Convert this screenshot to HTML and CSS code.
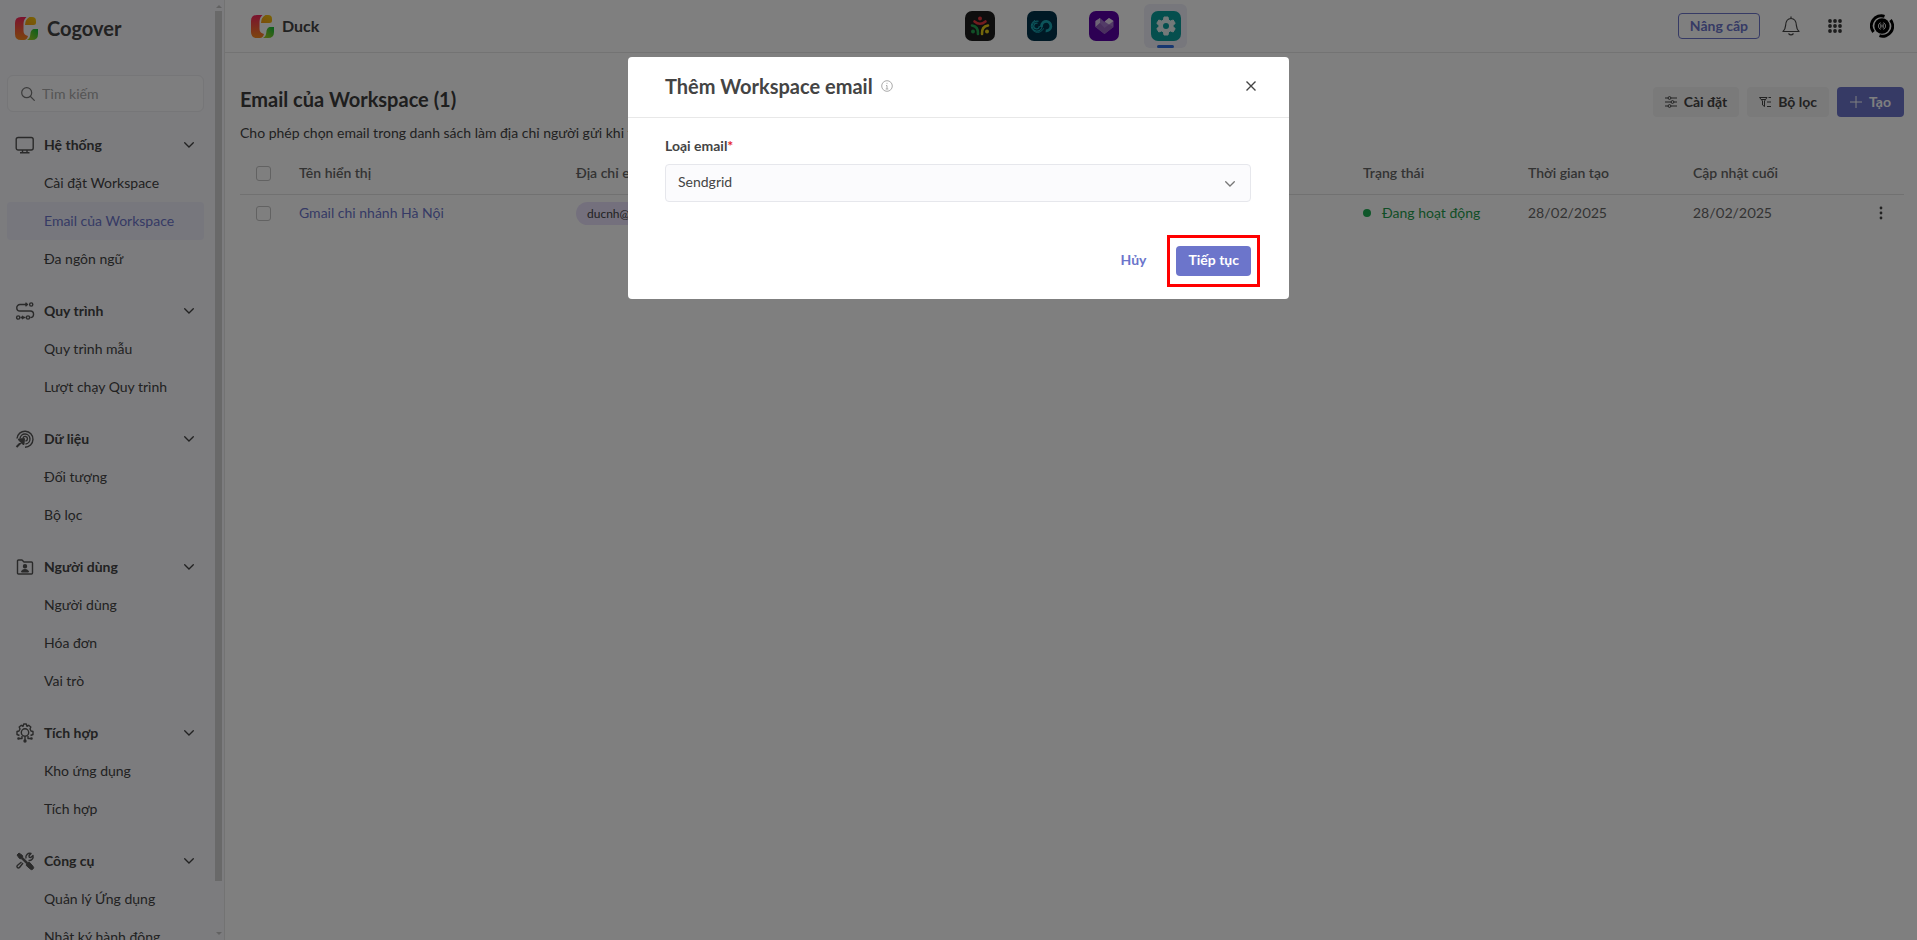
FILE: index.html
```html
<!DOCTYPE html>
<html lang="vi">
<head>
  <meta charset="UTF-8" />
  <meta name="viewport" content="width=device-width, initial-scale=1.0" />
  <title>Email của Workspace</title>
  <link rel="stylesheet" href="styles.css">
</head>
<body>
  <!-- shared icons -->
  <svg class="defs" width="0" height="0" aria-hidden="true">
    <defs>
      <linearGradient id="gRed" x1="0" y1="0" x2="0" y2="1">
        <stop offset="0" stop-color="#f5255e" />
        <stop offset="1" stop-color="#f98a1c" />
      </linearGradient>
      <linearGradient id="gYellow" x1="0" y1="1" x2="1" y2="0">
        <stop offset="0" stop-color="#f59a14" />
        <stop offset="1" stop-color="#f2c80c" />
      </linearGradient>
      <linearGradient id="gGreen" x1="0" y1="1" x2="1" y2="0">
        <stop offset="0" stop-color="#b5cf1f" />
        <stop offset="1" stop-color="#0fbf3c" />
      </linearGradient>
      <symbol id="logo" viewBox="0 0 23 23">
        <path d="M6 0h5.500Q8.500 2.500 8.500 7v7q0 4 4.500 5-1 4-4 4H6q-6 0-6-6V6q0-6 6-6z" fill="url(#gRed)" />
        <path d="M14.500 0H17q4 0 4 4v1.500Q21 8 18.500 8H10q0-5.500 4.500-8z" fill="url(#gYellow)" />
        <path d="M18.500 12H23v5q0 6-6 6h-5q3-1.500 3.300-5.500Q15.500 13 18.500 12z" fill="url(#gGreen)" />
      </symbol>
      <symbol id="chevron" viewBox="0 0 10 6">
        <path d="M.7.7 5 5 9.300.7" fill="none" stroke="currentColor" stroke-width="1.300" stroke-linecap="round" />
      </symbol>
    </defs>
  </svg>

  <div class="app">
    <aside class="sidebar">
      <div class="sidebar-content">
        <div class="brand">
          <svg class="logo"><use href="#logo" /></svg>
          <span>Cogover</span>
        </div>
        <label class="search">
          <svg width="14" height="14" viewBox="0 0 14 14" fill="none" stroke="#777" stroke-width="1.200" stroke-linecap="round"><circle cx="5.700" cy="5.700" r="5" /><path d="m9.500 9.500 3.800 3.800" /></svg>
          <input type="text" placeholder="Tìm kiếm" aria-label="Tìm kiếm">
        </label>
        <nav>
          <section class="group">
            <button class="group-title">
              <svg class="group-icon" viewBox="0 0 20 20"><rect x="1.200" y="2.500" width="17" height="12.500" rx="2" /><path d="M7.500 15v2.500M12 15v2.500M5 17.700h9.500" /></svg>
              <span>Hệ thống</span>
              <svg class="chevron"><use href="#chevron" /></svg>
            </button>
            <a href="#">Cài đặt Workspace</a>
            <a href="#" class="active">Email của Workspace</a>
            <a href="#">Đa ngôn ngữ</a>
          </section>
          <section class="group">
            <button class="group-title">
              <svg class="group-icon" viewBox="0 0 20 20"><path d="M12 3.500H5a3.200 3.200 0 0 0 0 6.500h10.300a3 3 0 0 1 0 6.500M10.500 1.800 12.500 3.500l-2 1.700M5.500 16.500h5M7 15l2 1.500L7 18" /><circle cx="16.200" cy="3.500" r="1.600" /><circle cx="3.200" cy="16.500" r="1.600" /><circle cx="13" cy="16.500" r="1.600" /></svg>
              <span>Quy trình</span>
              <svg class="chevron"><use href="#chevron" /></svg>
            </button>
            <a href="#">Quy trình mẫu</a>
            <a href="#">Lượt chạy Quy trình</a>
          </section>
          <section class="group">
            <button class="group-title">
              <svg class="group-icon" viewBox="0 0 20 20"><path d="M2 9.500a8 8 0 1 1 8 8.700M5 9.500A5 5 0 1 1 10.500 15M8 9a2.300 2.300 0 1 1 2.500 3" /><path d="m1.500 18 6-6M4 10.500l5-.5-.5 5z" class="solid" stroke-width="2" /></svg>
              <span>Dữ liệu</span>
              <svg class="chevron"><use href="#chevron" /></svg>
            </button>
            <a href="#">Đối tượng</a>
            <a href="#">Bộ lọc</a>
          </section>
          <section class="group">
            <button class="group-title">
              <svg class="group-icon" viewBox="0 0 20 20"><path d="M3.500 3H7l2 2h7.500q1 0 1 1v10q0 1-1 1h-13q-1 0-1-1V4q0-1 1-1z" /><circle cx="10" cy="9.300" r="1.500" class="solid" /><path d="M6.500 15q0-2.500 3.500-2.500t3.500 2.500z" class="solid" stroke-width="1" /></svg>
              <span>Người dùng</span>
              <svg class="chevron"><use href="#chevron" /></svg>
            </button>
            <a href="#">Người dùng</a>
            <a href="#">Hóa đơn</a>
            <a href="#">Vai trò</a>
          </section>
          <section class="group">
            <button class="group-title">
              <svg class="group-icon" viewBox="0 0 20 20"><circle cx="10" cy="9.500" r="3.700" /><path d="M4.500 12.500 2 11.500v-3l2-.5 1-2-.8-2L6.300 2.300l1.700 1L8.700 1h2.600l.7 2.300 1.700-1L15.800 4 15 6l1 2 2 .5v3l-2.500 1M10 13.500V18M7 13v2.500H3.500M13 13v2.500h3.500" /><circle cx="10" cy="18" r="1" class="solid" /><circle cx="3.500" cy="15.500" r=".6" class="solid" /><circle cx="16.500" cy="15.500" r=".6" class="solid" /></svg>
              <span>Tích hợp</span>
              <svg class="chevron"><use href="#chevron" /></svg>
            </button>
            <a href="#">Kho ứng dụng</a>
            <a href="#">Tích hợp</a>
          </section>
          <section class="group">
            <button class="group-title">
              <svg class="group-icon" viewBox="0 0 20 20"><path d="M2 4 4 2l3.500 2.500.3 2 5 5 1.700-.2 3.500 4a1.900 1.900 0 0 1-2.700 2.700l-4-3.500.2-1.700-5-5-2-.3z" class="solid" stroke-width="1" /><path d="m8 12-3.700 4.700a1.500 1.500 0 0 1-2-2.200L6.500 11M11 7.500a4 4 0 0 1 5-5l-2 2.300.3 1.500 1.500.3L18 4.500a4 4 0 0 1-4.500 5" /></svg>
              <span>Công cụ</span>
              <svg class="chevron"><use href="#chevron" /></svg>
            </button>
            <a href="#">Quản lý Ứng dụng</a>
            <a href="#">Nhật ký hành động</a>
          </section>
        </nav>
      </div>
      <div class="scrollbar">
        <span class="arrow-up"></span>
        <span class="thumb"></span>
        <span class="arrow-down"></span>
      </div>
    </aside>

    <div class="page">
      <header class="topbar">
        <div class="workspace">
          <svg class="logo"><use href="#logo" /></svg>
          <span>Duck</span>
        </div>
        <div class="apps">
          <button class="app-tile" aria-label="Nhân sự">
            <svg viewBox="0 0 30 30"><rect width="30" height="30" rx="7" fill="#1d1d1d" /><g fill="none" stroke-width="2.600" stroke-linecap="round"><path d="M9.500 10.500q5.500 4.500 11 0" stroke="#e8383d" /><path d="M7 14.500q6.500 1 6 8.500" stroke="#22a14f" /><path d="M23 14.500q-6.500 1-6 8.500" stroke="#e9cf17" /></g><circle cx="15" cy="7.500" r="2" fill="#e8383d" /><circle cx="8" cy="20.500" r="2" fill="#22a14f" /><circle cx="22" cy="20.500" r="2" fill="#e9cf17" /></svg>
          </button>
          <button class="app-tile" aria-label="Kết nối">
            <svg viewBox="0 0 30 30"><rect width="30" height="30" rx="7" fill="#01334b" /><g fill="none" stroke="#18a9b5"><path d="M11.500 10.300a5 5 0 1 0 3.500 5.700" stroke-width="1.200" /><path d="M10.500 8.300a7 7 0 1 0 6.500 9" stroke-width="1" opacity="0" /><path d="M10.500 12.400a2.800 2.800 0 1 0 1.700 3.600V15" stroke-width="1.200" /><path d="M8 9.300a6.300 6.300 0 1 0 8.500 8" stroke-width="1" /><path d="M14.500 16v-1.200a4.700 4.700 0 1 1 4.200 5" stroke-width="2.800" /></g></svg>
          </button>
          <button class="app-tile" aria-label="Khách hàng">
            <svg viewBox="0 0 30 30"><rect width="30" height="30" rx="7" fill="#5b00a6" /><path d="m6.500 10 4.500-3 4.500 4L20 7l4.500 3v6l-9 7-9-7z" fill="#a678cf" /><path d="m6.500 10 4.500-3v5l-4.500 4z" fill="#dcc8ec" /><path d="m15.500 10.500 4.500-3.500 4.500 3-4.500 3.500z" fill="#ecdff5" /><path d="m6.500 16 4.500-4 4.500 5 4.500-3.500 4.500 2.500-9 7z" fill="#9560bd" /></svg>
          </button>
          <button class="app-tile current" aria-label="Thiết lập">
            <svg viewBox="0 0 30 30"><rect width="30" height="30" rx="7" fill="#0a9f9c" /><path d="M13 6h4l.6 3 1.800 1 2.800-1 2 3.400-2.200 2v1.200l2.200 2-2 3.400-2.800-1-1.800 1-.6 3h-4l-.6-3-1.800-1-2.800 1-2-3.400 2.200-2v-1.200l-2.200-2 2-3.400 2.800 1 1.800-1z" fill="#e6f3f3" stroke="#e6f3f3" stroke-linejoin="round" /><circle cx="15" cy="15" r="3" fill="#0a9f9c" /></svg>
          </button>
        </div>
        <div class="tools">
          <button class="upgrade">Nâng cấp</button>
          <button class="icon-button" aria-label="Thông báo">
            <svg width="18" height="20" viewBox="0 0 18 20" fill="none" stroke="#444" stroke-width="1.200" stroke-linejoin="round"><path d="M9 .500v2M1 15.500h16q-2.300-2-2.600-6Q14 2.500 9 2.500T3.600 9.500q-.3 4-2.600 6zM6.500 17.500q2.500 2.800 5 0" /></svg>
          </button>
          <button class="icon-button" aria-label="Ứng dụng">
            <svg width="14" height="14" viewBox="0 0 14 14" fill="#3a3a3a"><circle cx="2" cy="2" r="1.900" /><circle cx="7" cy="2" r="1.900" /><circle cx="12" cy="2" r="1.900" /><circle cx="2" cy="7" r="1.900" /><circle cx="7" cy="7" r="1.900" /><circle cx="12" cy="7" r="1.900" /><circle cx="2" cy="12" r="1.900" /><circle cx="7" cy="12" r="1.900" /><circle cx="12" cy="12" r="1.900" /></svg>
          </button>
          <button class="icon-button" aria-label="Tài khoản">
            <svg width="24" height="24" viewBox="0 0 24 24"><path d="M3.500 18A10 10 0 0 1 14.500 2.300" fill="none" stroke="#000" stroke-width="3" /><path d="M20.500 6A10 10 0 0 1 9.500 21.700" fill="none" stroke="#000" stroke-width="3" /><circle cx="12" cy="12" r="7.700" fill="#000" /><path d="M10.500 8.500a4 4 0 0 0 0 7M13.500 8.500a4 4 0 0 1 0 7M10.800 9.500v5M13.200 9.500v5M10.800 12h2.400" fill="none" stroke="#ddd" stroke-width="1" /></svg>
          </button>
        </div>
      </header>

      <main class="content">
        <div class="heading">
          <div class="heading-text">
            <h1>Email của Workspace (1)</h1>
            <p>Cho phép chọn email trong danh sách làm địa chỉ người gửi khi thực</p>
          </div>
          <div class="actions">
            <button class="action">
              <svg width="12" height="12" viewBox="0 0 12 12" fill="none" stroke="#444"><path d="M0 2h3M6 2h6M0 6h6M9 6h3M0 10h3M6 10h6" /><circle cx="4.500" cy="2" r="1.400" /><circle cx="7.500" cy="6" r="1.400" /><circle cx="4.500" cy="10" r="1.400" /></svg>
              Cài đặt
            </button>
            <button class="action">
              <svg width="12" height="12" viewBox="0 0 12 12" fill="none" stroke="#444"><path d="M.5 1.500h7.500L5.500 5v5.500L3.500 9V5zM2 3.500h4.500M9.500 1.500H12M8 6h4M8 10.500h4" /></svg>
              Bộ lọc
            </button>
            <button class="action primary">
              <svg width="12" height="12" viewBox="0 0 12 12" stroke="#fff"><path d="M6 0v12M0 6h12" /></svg>
              Tạo
            </button>
          </div>
        </div>

        <table class="emails">
          <colgroup>
            <col class="col-check"><col class="col-name"><col>
            <col class="col-info"><col class="col-info"><col class="col-info"><col class="col-more">
          </colgroup>
          <thead>
            <tr>
              <th><input type="checkbox" aria-label="Chọn tất cả"></th>
              <th>Tên hiển thị</th>
              <th>Địa chỉ email</th>
              <th>Trạng thái</th>
              <th>Thời gian tạo</th>
              <th>Cập nhật cuối</th>
              <th></th>
            </tr>
          </thead>
          <tbody>
            <tr>
              <td><input type="checkbox" aria-label="Chọn Gmail chi nhánh Hà Nội"></td>
              <td><a href="#">Gmail chi nhánh Hà Nội</a></td>
              <td><span class="chip">ducnh@cogover.com</span></td>
              <td><span class="status">Đang hoạt động</span></td>
              <td class="date">28/02/2025</td>
              <td class="date">28/02/2025</td>
              <td>
                <button class="icon-button more" aria-label="Thao tác">
                  <svg width="4" height="14" viewBox="0 0 4 14" fill="#444"><circle cx="2" cy="2" r="1.400" /><circle cx="2" cy="7" r="1.400" /><circle cx="2" cy="12" r="1.400" /></svg>
                </button>
              </td>
            </tr>
          </tbody>
        </table>
      </main>
    </div>
  </div>

  <div class="backdrop">
    <form class="modal" role="dialog" aria-labelledby="modalTitle">
      <div class="modal-header">
        <h2 id="modalTitle">Thêm Workspace email</h2>
        <svg width="12" height="12" viewBox="0 0 12 12" fill="none" stroke="#aaa"><circle cx="6" cy="6" r="5.300" /><path d="M5 5.500h1V9M4.700 9h2.600M5.500 3.300h1" /></svg>
        <button type="button" class="icon-button close" aria-label="Đóng">
          <svg width="10" height="10" viewBox="0 0 10 10" stroke="#444" stroke-width="1.400"><path d="m.5.5 9 9M9.500.5l-9 9" /></svg>
        </button>
      </div>
      <div class="modal-body">
        <label for="emailType">Loại email<span class="required">*</span></label>
        <div class="select">
          <select id="emailType">
            <option>Sendgrid</option>
          </select>
          <svg class="chevron"><use href="#chevron" /></svg>
        </div>
      </div>
      <div class="modal-footer">
        <button type="button" class="cancel">Hủy</button>
        <button type="button" class="next">Tiếp tục</button>
      </div>
    </form>
  </div>
</body>
</html>
```
FILE: styles.css
```css
* {
  box-sizing:border-box;
}
body {
  margin:0;
  font-family:Lato, "Open Sans", sans-serif;
  font-size:14px;
  line-height:20px;
  color:#444;
  background:#fff;
}
button, input, select {
  font:inherit;
  color:inherit;
}
button {
  border:0;
  padding:0;
  background:none;
  cursor:pointer;
}
a {
  color:inherit;
  text-decoration:none;
}
svg {
  display:block;
  flex:none;
}
h1, h2, p {
  margin:0;
}
.defs {
  position:absolute;
}
.app {
  display:flex;
  height:100vh;
  overflow:hidden;
}
.logo {
  width:23px;
  height:23px;
}
.chevron {
  width:10px;
  height:6px;
}

/* sidebar */
.sidebar {
  display:flex;
  flex:none;
  width:225px;
  background:#f8f8fc;
  border-right:1px solid #e6e6e6;
}
.sidebar-content {
  flex:1;
  overflow:hidden;
  padding:0 11px 0 7px;
}
.brand {
  display:flex;
  align-items:center;
  gap:9px;
  height:56px;
  padding-left:8px;
  font-size:20px;
  font-weight:700;
}
.search {
  display:flex;
  align-items:center;
  gap:7px;
  height:37px;
  margin:19px 0 14px;
  padding:0 13px;
  border:1px solid #ececf0;
  border-radius:6px;
  background:#fcfcfe;
}
.search input {
  flex:1;
  min-width:0;
  border:0;
  padding:0;
  background:none;
  outline:0;
}
.search input::placeholder {
  color:#aaa;
}
.group {
  margin-bottom:14px;
}
.group-title {
  display:flex;
  align-items:center;
  width:100%;
  height:38px;
  padding:0 10px 0 8px;
  gap:9px;
  font-weight:700;
  text-align:left;
}
.group-title span {
  flex:1;
}
.group-icon {
  width:20px;
  height:20px;
  fill:none;
  stroke:#555;
  stroke-width:1.4;
  stroke-linejoin:round;
}
.group-icon .solid {
  fill:#555;
}
.group a {
  display:block;
  height:38px;
  padding-left:37px;
  line-height:38px;
  border-radius:4px;
  white-space:nowrap;
}
.group a.active {
  background:#eeeefa;
  color:#6c75cb;
}
.scrollbar {
  display:flex;
  flex-direction:column;
  align-items:center;
  width:7px;
  margin-right:2px;
  padding:5px 0;
}
.thumb {
  width:7px;
  height:93.6%;
  margin:3px 0 auto;
  background:#d2d2d2;
}
.arrow-up, .arrow-down {
  border:3px solid transparent;
}
.arrow-up {
  border-top:0;
  border-bottom-color:#c4c4c4;
}
.arrow-down {
  border-bottom:0;
  border-top-color:#c4c4c4;
}

/* top bar */
.page {
  flex:1;
  min-width:0;
}
.topbar {
  display:grid;
  grid-template-columns:1fr auto 1fr;
  align-items:center;
  height:53px;
  padding:0 23px 0 26px;
  border-bottom:1px solid #e6e6e6;
}
.workspace {
  display:flex;
  align-items:center;
  gap:8px;
  font-size:16px;
  font-weight:700;
}
.apps {
  display:flex;
  align-items:center;
  gap:19px;
}
.app-tile {
  display:flex;
  justify-content:center;
  align-items:center;
  position:relative;
  width:43px;
  height:44px;
  border-radius:6px;
}
.app-tile svg {
  width:30px;
  height:30px;
}
.app-tile.current {
  background:#eeeef8;
}
.app-tile.current::after {
  content:"";
  position:absolute;
  bottom:0;
  width:17px;
  height:3px;
  border-radius:2px;
  background:#2f6fe0;
}
.tools {
  display:flex;
  justify-content:flex-end;
  align-items:center;
}
.icon-button {
  display:flex;
}
.upgrade {
  height:26px;
  padding:0 11px;
  border:1px solid #6c75cb;
  border-radius:4px;
  color:#6c75cb;
  font-weight:700;
}
.tools .icon-button {
  margin-left:22px;
}
.tools .icon-button + .icon-button {
  margin-left:28px;
}

/* content */
.content {
  padding:30px 13px 0 15px;
}
.heading {
  display:flex;
  justify-content:space-between;
}
h1 {
  font-size:20px;
  line-height:32px;
  color:#3c3c3c;
}
.heading-text p {
  margin-top:8px;
}
.actions {
  display:flex;
  gap:8px;
  margin-top:4px;
}
.action {
  display:flex;
  align-items:center;
  gap:7px;
  height:30px;
  padding:0 12px;
  border-radius:4px;
  background:#f5f5f5;
  font-weight:700;
}
.action.primary {
  padding:0 13px;
  background:#6c75cb;
  color:#fff;
}
.emails {
  width:100%;
  margin-top:10px;
  table-layout:fixed;
  border-collapse:collapse;
}
.emails th, .emails td {
  height:38px;
  padding:0;
  text-align:left;
  white-space:nowrap;
}
.emails th {
  height:41px;
  border-bottom:1px solid #e2e2e2;
  font-weight:600;
  color:#666;
}
.emails th:first-child, .emails td:first-child {
  padding-left:16px;
}
.emails td:last-child {
  padding-left:21px;
}
.emails td a {
  color:#6c75cb;
}
.emails .date {
  color:#666;
  font-variant-numeric:proportional-nums;
}
.emails input {
  display:block;
  appearance:none;
  width:15px;
  height:15px;
  margin:0;
  border:1px solid #c4c4c4;
  border-radius:3px;
}
.col-check {
  width:59px;
}
.col-name {
  width:277px;
}
.col-info {
  width:165px;
}
.col-more {
  width:46px;
}
.chip {
  display:inline-block;
  padding:0 11px;
  border-radius:12px;
  background:#e9e1fb;
  font-size:12px;
  line-height:23px;
}
.status {
  display:flex;
  align-items:center;
  gap:11px;
  color:#1f9d4d;
}
.status::before {
  content:"";
  width:8px;
  height:8px;
  border-radius:50%;
  background:#1fae54;
}

/* modal */
.backdrop {
  position:fixed;
  inset:0;
  padding-top:57px;
  background:rgba(0,0,0,.5);
}
.modal {
  width:661px;
  margin:0 auto;
  border-radius:4px;
  background:#fff;
}
.modal-header {
  display:flex;
  align-items:center;
  gap:8px;
  height:61px;
  padding:0 33px 2px 37px;
  border-bottom:1px solid #e8e8e8;
}
h2 {
  font-size:20px;
  line-height:28px;
}
.close {
  margin-left:auto;
}
.modal-body {
  padding:18px 38px 0 37px;
}
.modal-body label {
  display:block;
  font-weight:700;
}
.required {
  color:#e5252a;
}
.select {
  position:relative;
  margin-top:8px;
}
.select select {
  display:block;
  appearance:none;
  width:100%;
  height:38px;
  padding:0 12px 2px;
  border:1px solid #e6e7ec;
  border-radius:4px;
  background:#fbfbfd;
}
.select .chevron {
  position:absolute;
  right:16px;
  top:17px;
  color:#777;
}
.modal-footer {
  display:flex;
  justify-content:flex-end;
  align-items:center;
  gap:30px;
  padding:44px 38px 23px;
  font-weight:700;
}
.modal-footer button {
  height:30px;
  padding-bottom:2px;
}
.cancel {
  color:#6c75cb;
}
.modal-footer .next {
  position:relative;
  padding:0 12px 2px;
  border-radius:4px;
  background:#6c75cb;
  color:#fff;
}
.next::after {
  content:"";
  position:absolute;
  inset:-11px -9px;
  border:3px solid #f00;
}
```
